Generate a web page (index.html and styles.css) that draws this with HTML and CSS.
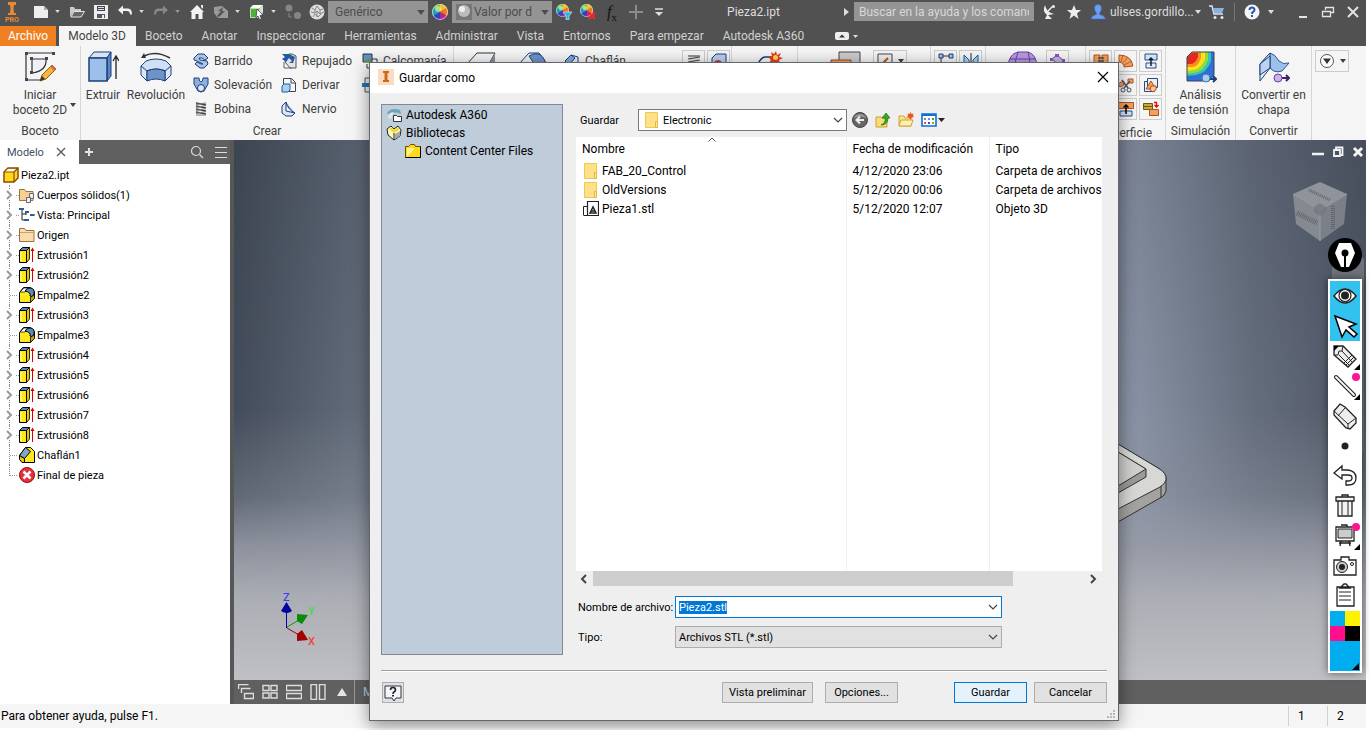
FILE: index.html
```html
<!DOCTYPE html>
<html lang="es">
<head>
  <meta charset="UTF-8">
  <meta name="viewport" content="width=device-width, initial-scale=1.0">
  <title>Pieza2.ipt</title>
  <link rel="stylesheet" href="styles.css">
</head>
<body>
  <!-- shared icons -->
  <svg width="0" height="0" class="defs" aria-hidden="true">
    <symbol id="caret" viewBox="0 0 6 4"><path d="M0 0h6L3 4z" fill="currentColor"/></symbol>
    <symbol id="chev" viewBox="0 0 10 6"><path d="M1 1l4 4 4-4" fill="none" stroke="#444" stroke-width="1.2"/></symbol>
    <symbol id="arrow-r" viewBox="0 0 10 10"><path d="M2 1l4 4-4 4" fill="none" stroke="#999" stroke-width="2"/></symbol>
    <symbol id="undo" viewBox="0 0 16 16"><path d="M1 6l5-4.500v3h5q4 0 4 6h-2q0-3.500-3-3.500H6v3.500z" fill="currentColor"/></symbol>
    <symbol id="wheel" viewBox="0 0 16 16">
      <path d="M8 8V0a8 8 0 0 1 7 4z" fill="#f4c020"/><path d="M8 8l7-4a8 8 0 0 1 0 8z" fill="#f07820"/>
      <path d="M8 8l7 4a8 8 0 0 1-7 4z" fill="#c02090"/><path d="M8 8v8a8 8 0 0 1-7-4z" fill="#3040c0"/>
      <path d="M8 8l-7 4a8 8 0 0 1 0-8z" fill="#20a0b0"/><path d="M8 8L1 4a8 8 0 0 1 7-4z" fill="#60c030"/>
      <circle cx="8" cy="8" r="7.500" fill="none" stroke="#ddd" stroke-width=".8"/><circle cx="6" cy="5" r="3" fill="#fff" opacity=".5"/>
    </symbol>
    <symbol id="folder" viewBox="0 0 16 16"><path d="M1.500.5h12v15h-12z" fill="#ffe08a" stroke="#efc94c"/><path d="M11.500 9.500h2v6h-2z" fill="#ffeaa8" stroke="#e6b930"/></symbol>
    <symbol id="extrude" viewBox="0 0 16 16">
      <path d="M.5 3.500l3-3h7l-3 3z" fill="#4f86bd" stroke="#000"/><path d="M7.500 3.500l3-3v11.500l-3 3.500z" fill="#e8c400" stroke="#000" stroke-width=".8"/>
      <path d="M.5 3.500h7v12h-7z" fill="#ffe81c" stroke="#000"/><path d="M2 5v9" stroke="#fffbc0"/>
      <path d="M13.500 2v13" stroke="#e00000"/><path d="M11.500 4L13.500.5l2 3.500z" fill="#e00000"/>
    </symbol>
    <symbol id="fillet" viewBox="0 0 16 16">
      <path d="M.5 5.500l4-5h7l4 4v7l-4 4H.5z" fill="#ffe81c" stroke="#000"/><path d="M1 5l4-4h4L6 5z" fill="#fff" stroke="#000" stroke-width=".7"/>
      <path d="M6 4q2-4 6-3 4 1 3 6l-2 3-2-1q1-4-5-5z" fill="#5d88ba" stroke="#000"/><path d="M11.500 10.500l4-3v4l-4 4z" fill="#c8a800" stroke="#000" stroke-width=".8"/>
    </symbol>
    <symbol id="surf" viewBox="0 0 16 16"><path d="M2 10h12v5H2z" fill="#d9e4f2" stroke="#274b87"/><path d="M.5 1.500h15v6H.5z" fill="#f2a25f" stroke="#b5521b"/><path d="M8 13V4M5.500 6.500L8 4l2.500 2.500" fill="none" stroke="#000" stroke-width="1.500"/></symbol>
  </svg>

  <div class="app">
    <header class="titlebar">
      <svg class="logo" viewBox="0 0 25 25"><path d="M8 3h8v3h-2l-.500 3 .500 5h2v2H8v-2h2l.500-5-.500-3H8z" fill="#e88a35"/><text x="12" y="23" class="logo-text">PRO</text></svg>
      <div class="quick">
        <button aria-label="Nuevo"><svg viewBox="0 0 16 16"><path d="M1 2h10l4 4v8H1z" fill="#eee"/><path d="M11 2v4h4z" fill="#aaa"/></svg></button>
        <svg class="caret"><use href="#caret"/></svg>
        <button aria-label="Abrir"><svg viewBox="0 0 16 16"><path d="M1 13V3h4l1 2h6v2H5z" fill="#c8ccd0"/><path d="M5 7.500h10.500L12 13H2z" fill="#666" stroke="#e4e6e8"/></svg></button>
        <button aria-label="Guardar archivo"><svg viewBox="0 0 16 16"><path d="M1 1h14v14H1z" fill="#eee"/><path d="M4 2h8v5H4z" fill="#445"/><path d="M5 3.500h6M5 5.500h6" stroke="#ddd"/><path d="M4 10h8v4H4z" fill="#556"/><path d="M9 11h2v3H9z" fill="#eee"/></svg></button>
        <button aria-label="Deshacer"><svg viewBox="0 0 16 16" class="bright"><use href="#undo"/></svg></button>
        <svg class="caret"><use href="#caret"/></svg>
        <button aria-label="Rehacer"><svg viewBox="0 0 16 16" class="flip"><use href="#undo"/></svg></button>
        <svg class="caret dim"><use href="#caret"/></svg>
        <button aria-label="Inicio"><svg viewBox="0 0 16 16"><path d="M8 1l7 7h-1.500v7h-4v-5h-3v5h-4V8H1z" fill="#f2f2f2"/><path d="M12 1h2v4l-2-2z" fill="#eee"/></svg></button>
        <button aria-label="Actualizar"><svg viewBox="0 0 16 16"><path d="M1 3l8-1 6 5v7H5l-4-5z" fill="#9a9a9a"/><path d="M4 12l4-5H5l5-4-1 4h3l-6 6z" fill="#555"/></svg></button>
        <svg class="caret"><use href="#caret"/></svg>
        <button aria-label="Seleccionar"><svg viewBox="0 0 16 16"><path d="M1 4l3-3h10l-3 3z" fill="#fff"/><path d="M11 4l3-3v8l-3 3z" fill="#ddd"/><path d="M1.500 4.500h9v9h-9z" fill="#4fae3c" stroke="#b8e0a8"/><path d="M8 5l6 6-3 .5 1.500 3.500-2 .5L9 12l-2 2z" fill="#fff" stroke="#333" stroke-width=".7"/></svg></button>
        <svg class="caret"><use href="#caret"/></svg>
        <button aria-label="Copiar"><svg viewBox="0 0 16 16"><circle cx="4" cy="4" r="3.500" fill="#858585"/><circle cx="12.500" cy="11.500" r="3.500" fill="#858585"/><path d="M4 9v4h3" fill="none" stroke="#888"/></svg></button>
        <button aria-label="Material"><svg viewBox="0 0 16 16"><circle cx="8" cy="8" r="7.500" fill="#ddd"/><path d="M3 4l3 2 2-4 3 4 3-1M2 8l4 1 2-2 3 3 4-2M4 13l2-3 3 3 3-3M6 6v3M11 6v4M8 7v6" fill="none" stroke="#888"/></svg></button>
      </div>
      <div class="materials">
        <div class="dark-combo"><select aria-label="Material"><option>Genérico</option></select><svg class="dc-arrow"><use href="#caret"/></svg></div>
        <svg class="i16"><use href="#wheel"/></svg>
        <div class="dark-combo with-icon"><svg class="i16 dc-icon" viewBox="0 0 16 16"><path d="M0 0h16v16H0z" fill="#777"/><circle cx="8" cy="7" r="6" fill="#bbb"/><circle cx="6" cy="5" r="3" fill="#eee"/></svg><select aria-label="Aspecto"><option>Valor por defecto</option></select><svg class="dc-arrow"><use href="#caret"/></svg></div>
      </div>
      <div class="quick-end">
        <button aria-label="Ajustar"><svg viewBox="0 0 16 16"><use href="#wheel" width="13" height="13"/><path d="M7 8h9l-3 4v4h-3v-4z" fill="#29b5ea" stroke="#eee" stroke-width=".6"/></svg></button>
        <button aria-label="Borrar"><svg viewBox="0 0 16 16"><use href="#wheel" width="13" height="13"/><path d="M9 9l6 6M15 9l-6 6" stroke="#f22" stroke-width="2"/></svg></button>
        <button aria-label="Parámetros" class="fx"><i>f</i><sub>x</sub></button>
        <button aria-label="Añadir"><svg viewBox="0 0 16 16"><path d="M8 1v14M1 8h14" stroke="#8c8c8c" stroke-width="2"/></svg></button>
        <svg class="menu-caret" viewBox="0 0 8 8"><path d="M0 1h8" stroke="#ddd" stroke-width="1.500"/><path d="M0 4h8L4 8z" fill="#ddd"/></svg>
      </div>
      <h1>Pieza2.ipt</h1>
      <div class="help-area">
        <svg class="play" viewBox="0 0 5 8"><path d="M0 0l5 4-5 4z" fill="#ddd"/></svg>
        <input class="help-search" type="text" aria-label="Buscar" placeholder="Buscar en la ayuda y los comandos">
        <svg class="i16" viewBox="0 0 16 16"><path d="M3 1q1 7 9 9l-5 1h-1l4 4H3l2-4Q0 7 3 1z" fill="#eee"/><path d="M6 7l5-5" stroke="#eee" stroke-width="1.500"/><circle cx="11.500" cy="2.500" r="1.500" fill="#eee"/></svg>
        <svg class="i16" viewBox="0 0 16 16"><path d="M8 1l2 5h5l-4 3.500L12.500 15 8 11.500 3.500 15 5 9.500 1 6h5z" fill="#eee"/></svg>
        <svg class="i16" viewBox="0 0 16 16"><path d="M4.500 4q0-3.500 3.500-3.500T11.500 4 9.500 9v1.500q5 .5 6 4.500H1q1-4 5.500-4.500V9Q4.500 7 4.500 4z" fill="#6a9ef0" stroke="#3c6cc0" stroke-width=".6"/></svg>
        <a href="#" class="user">ulises.gordillo...</a>
        <svg class="caret user-caret"><use href="#caret"/></svg>
        <svg class="i16" viewBox="0 0 16 16"><path d="M0 2h3l2 8h9" fill="none" stroke="#dbe6f6" stroke-width="1.500"/><path d="M4 4h11l-2 5H5z" fill="#8ab0e0"/><circle cx="6" cy="13.500" r="1.500" fill="#dde8fa"/><circle cx="13" cy="13.500" r="1.500" fill="#dde8fa"/></svg>
        <span class="tb-sep"></span>
        <svg class="i16" viewBox="0 0 16 16"><circle cx="8" cy="8" r="7.500" fill="#f4f6fa"/><path d="M5.500 6q0-2.500 2.500-2.500T10.500 6q0 1-1.500 2Q8 8.500 8 10" fill="none" stroke="#2958b0" stroke-width="2"/><path d="M7 11h2v2H7z" fill="#2958b0"/></svg>
        <svg class="caret"><use href="#caret"/></svg>
      </div>
      <div class="window-btns">
        <button aria-label="Minimizar"><svg viewBox="0 0 14 14"><path d="M3 12h8" stroke="#e4e4e4" stroke-width="2"/></svg></button>
        <button aria-label="Restaurar"><svg viewBox="0 0 14 14"><path d="M4.500 5V2.500h8v5H9M1.500 6.500h8v5h-8z" fill="none" stroke="#e4e4e4" stroke-width="1.300"/></svg></button>
        <button aria-label="Cerrar"><svg viewBox="0 0 14 14"><path d="M2 2l10 10M12 2L2 12" stroke="#e4e4e4" stroke-width="2"/></svg></button>
      </div>
    </header>

    <nav class="tabs">
      <a href="#" class="file">Archivo</a>
      <a href="#" class="active">Modelo 3D</a>
      <a href="#">Boceto</a>
      <a href="#">Anotar</a>
      <a href="#">Inspeccionar</a>
      <a href="#">Herramientas</a>
      <a href="#">Administrar</a>
      <a href="#">Vista</a>
      <a href="#">Entornos</a>
      <a href="#">Para empezar</a>
      <a href="#">Autodesk A360</a>
      <svg class="tab-min" viewBox="0 0 24 10"><rect y="1" width="14" height="8" rx="2" fill="#eee"/><path d="M4 6.500h6L7 3.500z" fill="#333"/><path d="M18 4h5l-2.500 3z" fill="#ddd"/></svg>
    </nav>

    <section class="ribbon">
      <div class="panel p-sketch">
        <button class="big">
          <svg viewBox="0 0 32 32"><path d="M2 2h28M2 2v27h14" fill="none" stroke="#333" stroke-width="1.200"/><path d="M8 8h14q1 12-14 14z" fill="#eef1f6" stroke="#333" stroke-width="1.200"/><path d="M1 1h3v3H1zM28 1h3v3h-3zM1 27h3v3H1zM6 6h3v3H6zM21 6h3v3h-3zM6 20h3v3H6z" fill="#445"/><path d="M18 24L28 14l4 4-10 10-6 2z" fill="#f5b83c" stroke="#8a5a18"/><path d="M26 16l4 4 2-2-4-4z" fill="#e06a4c"/><path d="M16 30l2-5 3 3z" fill="#333"/></svg>
          <span>Iniciar<br>boceto 2D</span>
        </button>
        <svg class="caret sk-caret"><use href="#caret"/></svg>
        <h2>Boceto</h2>
      </div>
      <div class="panel p-create">
        <div class="tools">
          <button class="big b-ext"><svg viewBox="0 0 32 32"><path d="M2 7l5-6h17l-4 6z" fill="#d6e4f6" stroke="#1d3f7c"/><path d="M20 7l4-6v24l-4 5z" fill="#5a86c2" stroke="#1d3f7c"/><path d="M2 7h18v23H2z" fill="#9cc0ea" stroke="#1d3f7c" stroke-width="1.500"/><path d="M29 28V6M26 10l3-5 3 5" fill="none" stroke="#222" stroke-width="1.300"/></svg><span>Extruir</span></button>
          <button class="big b-rev"><svg viewBox="0 0 32 32"><path d="M4 5q12-6 26 2" fill="none" stroke="#333" stroke-width="1.500"/><path d="M1 7l3-5 2 5z" fill="#333"/><path d="M1 15l5-5q10-4 20 0l5 5-5 5q-9-4-20 0z" fill="#cfe0f5" stroke="#1d3f7c"/><path d="M1 15l6 5v10l-6-6zM31 15l-6 5v10l6-6z" fill="#dbe7f6" stroke="#1d3f7c"/><path d="M7 20q9-4 18 0v10q-9-4-18 0z" fill="#6d93c8" stroke="#1d3f7c"/></svg><span>Revolución</span></button>
          <div class="small-grid">
            <button><svg viewBox="0 0 16 16"><path d="M1 5l4-4h6l4 4-3 2-3-2H6l1 2 7 1 1 3-4 4H7l-5-4 2-2 4 2h2L4 8 1 7z" fill="#a8c4e8" stroke="#1d3f7c"/></svg>Barrido</button>
            <button><svg viewBox="0 0 16 16"><path d="M8 1q3-1 7 2v12H9L4 9z" fill="#dfe3ea" stroke="#555"/><path d="M1 1h7l6 3-2 6H8l3-2-3-3-3 4-4-3 3-2z" fill="#2458a0"/><path d="M3 9v6h8" fill="none" stroke="#567"/></svg>Repujado</button>
            <button><svg viewBox="0 0 16 16"><path d="M1 1h9v8H1z" fill="#5e93d0" stroke="#333"/><path d="M2 9l4-4 4 4z" fill="#5a9c3c"/><path d="M10 6h5v5h-4M5 11v4h4" fill="none" stroke="#333"/></svg>Calcomanía</button>
            <button><svg viewBox="0 0 16 16"><path d="M1 1h5q0 4 2 4t2-4h5v6l-4 7q-3 2-6 0L1 7z" fill="#8db0dd" stroke="#1d3f7c"/><circle cx="8" cy="11" r="3.500" fill="#dbe7f6" stroke="#1d3f7c"/></svg>Solevación</button>
            <button><svg viewBox="0 0 16 16"><path d="M2.500 14.500V1.500h8l4 4v9z" fill="#f4f6fa" stroke="#444"/><path d="M10 2v4h4" fill="none" stroke="#444"/><path d="M1 9l2-2h6v6l-2 2H1z" fill="#a8d0f0" stroke="#1d5f9c"/></svg>Derivar</button>
            <button aria-label="Importar"><svg viewBox="0 0 16 16"><path d="M3 1h12v14H3z" fill="#eee" stroke="#555"/><path d="M0 6h8V3l6 5-6 5v-3H0z" fill="#2c70b8"/></svg></button>
            <button><svg viewBox="0 0 16 16"><path d="M3 2l10 2M3 5l10 2M3 8l10 2M3 11l10 2" stroke="#444" stroke-width="1.500"/><path d="M13 2L3 3.500M13 4.500L3 6.500M13 7.500L3 9.500M13 10.500L3 12.500M13 14H3" stroke="#777"/></svg>Bobina</button>
            <button><svg viewBox="0 0 16 16"><path d="M1 5l4-4v9l9 2-3 3H5l-4-3z" fill="#dbe7f6" stroke="#1d3f7c"/><path d="M5 1q2 8 9 11" fill="#86aadc" stroke="#1d3f7c"/></svg>Nervio</button>
          </div>
        </div>
        <h2>Crear</h2>
      </div>
      <div class="panel p-modify">
        <svg class="i32" viewBox="0 0 32 32"><path d="M2 14L12 3h18l-6 11z" fill="#f2f4f7" stroke="#333"/><path d="M30 3v20l-6-9z" fill="#8a9098"/></svg>
        <svg class="i32" viewBox="0 0 32 32"><path d="M2 14L12 3h10l8 11z" fill="#f2f4f7" stroke="#1d3f7c"/><path d="M12 6q14-8 18 12H20z" fill="#6d93c8" stroke="#1d3f7c"/></svg>
        <span class="chamfer"><svg class="i16" viewBox="0 0 16 16"><path d="M1 8l6-6 7 2v10H6z" fill="#e7eef8" stroke="#1d3f7c"/><path d="M1 8l6-6 4 3-6 7z" fill="#7fa8dc" stroke="#1d3f7c"/></svg>Chaflán</span>
        <button class="cell" aria-label="Rosca"><svg class="i16" viewBox="0 0 16 16"><path d="M3 2h10v13H3z" fill="#ddd"/><path d="M2 3h12M2 6l12-2M2 9l12-2M2 12l12-2" stroke="#444"/></svg></button>
        <button class="cell" aria-label="Combinar"><svg class="i16" viewBox="0 0 16 16"><path d="M1 5l4-4h10v9l-4 5H1z" fill="#b7d0f0" stroke="#1d3f7c"/><path d="M3 9q4-4 8 0v3H3z" fill="#c33"/></svg></button>
      </div>
      <div class="panel p-explore"><svg class="i32" viewBox="0 0 32 32"><path d="M2 16q4-9 8-9h10" fill="none" stroke="#1d3f7c" stroke-width="1.500"/><path d="M21 1l1 4 4-2-2 4 4 1-4 2 1 4-4-2-2 4-1-4-4 1 2-3-3-3 4-1-1-4 3 2z" fill="#e63a1c"/><circle cx="20.500" cy="7.500" r="2.500" fill="#ffd84a"/></svg></div>
      <div class="panel p-work">
        <svg class="i32" viewBox="0 0 32 32"><path d="M9 2h21v14H9z" fill="#ccc" stroke="#445"/><path d="M1 10h20v10H1z" fill="#f0a070" stroke="#a04a18"/></svg>
        <button class="cell wide" aria-label="Eje"><svg class="i16" viewBox="0 0 16 16"><path d="M1 1h14v14H1z" fill="#eee" stroke="#445"/><path d="M3 13l8-8" stroke="#b5521b" stroke-width="2"/></svg><svg class="caret"><use href="#caret"/></svg></button>
      </div>
      <div class="panel p-pattern">
        <button class="cell" aria-label="Rectangular"><svg class="i16" viewBox="0 0 16 16"><path d="M3 3h10M3 3v10" stroke="#333"/><path d="M1 1h4v4H1zM11 1h4v4h-4z" fill="#a8c4e8" stroke="#1d3f7c"/></svg></button>
        <button class="cell" aria-label="Simetría"><svg class="i16" viewBox="0 0 16 16"><path d="M1 2l5 5v7H1zM15 2l-5 5v7h5z" fill="#a8d0f0" stroke="#1d5f9c"/><path d="M8 0v16" stroke="#222"/></svg></button>
      </div>
      <div class="panel p-free">
        <svg class="i32" viewBox="0 0 32 32"><path d="M2 16Q3 4 12 2h10q8 2 9 14z" fill="#b99be0" stroke="#6b3fa8"/><path d="M12 2q-3 8-3 14M22 2q2 6 2 14M4 9h25" fill="none" stroke="#6b3fa8"/></svg>
        <button class="cell" aria-label="Forma"><svg class="i16" viewBox="0 0 16 16"><path d="M2 6l5-4 7 6-4 5z" fill="#c9b2ea" stroke="#555"/><path d="M5 1h4v3H5zM12 6h3v3h-3zM0 5h3v3H0z" fill="#8a56c8"/></svg></button>
      </div>
      <div class="panel p-surface">
        <div class="cells">
          <button class="cell" aria-label="Coser"><svg class="i16" viewBox="0 0 16 16"><path d="M1 2h6v12H1zM9 2h6v12H9z" fill="#f2a25f" stroke="#b5521b"/><path d="M5 5h6M5 8h6M5 11h6" stroke="#222"/></svg></button>
          <button class="cell" aria-label="Parche"><svg class="i16" viewBox="0 0 16 16"><path d="M1 2q12 0 14 11l-9 1q0-4-5-5z" fill="#f2a25f" stroke="#b5521b"/><path d="M5 2L3 9M10 4l-5 6M14 8l-8 4" stroke="#b5521b" stroke-width=".8"/></svg></button>
          <button class="cell" aria-label="Esculpir"><svg class="i16" viewBox="0 0 16 16"><path d="M2 1h12v6H2z" fill="#cfe3f8" stroke="#274b87"/><path d="M3 10h10v5H3z" fill="#e7eef8" stroke="#274b87"/><path d="M8 13V5M6 7l2-2 2 2" fill="none" stroke="#123" stroke-width="1.500"/></svg></button>
          <button class="cell" aria-label="Regla"><svg class="i16"><use href="#surf"/></svg></button>
          <button class="cell" aria-label="Recortar"><svg class="i16" viewBox="0 0 16 16"><path d="M10 2h5v4h-5zM0 7l5-3 1 4-4 2z" fill="#f2a25f" stroke="#b5521b"/><path d="M4 3l6 8M12 4L6 11" stroke="#556" stroke-width="1.500"/><circle cx="5" cy="13" r="2" fill="none" stroke="#456"/><circle cx="11" cy="13" r="2" fill="none" stroke="#456"/></svg></button>
          <button class="cell" aria-label="Reparar"><svg class="i16" viewBox="0 0 16 16"><path d="M1.500 4.500h10v10h-10z" fill="#eee" stroke="#274b87"/><path d="M4.500 1.500h10v9h-10z" fill="#eee" stroke="#274b87"/><path d="M3 12l5-8 5 8z" fill="#f2a25f" stroke="#b5521b"/><path d="M8 9h5v4l-3 2-3-2z" fill="#f7c79c" stroke="#b5521b"/></svg></button>
          <button class="cell" aria-label="Alargar"><svg class="i16"><use href="#surf"/></svg></button>
          <button class="cell" aria-label="Engrosar"><svg class="i16"><use href="#surf"/></svg></button>
          <button class="cell" aria-label="Reemplazar"><svg class="i16" viewBox="0 0 16 16"><path d="M.5 2.500h9v6h-9z" fill="#c8ac3a" stroke="#6b5810"/><path d="M1 5.500h8" stroke="#6b5810"/><path d="M6.500 8.500h9v6h-9z" fill="#f2a25f" stroke="#b5521b"/><path d="M11 1.500h2.500V5M11.500 4l2 2 2-2" fill="none" stroke="#e00" stroke-width="1.300"/></svg></button>
        </div>
        <h2>Superficie</h2>
      </div>
      <div class="panel p-sim">
        <button class="big"><svg viewBox="0 0 32 32"><path d="M2 6l5-5h22v23l-5 6H2z" fill="#2f6fd8"/><path d="M2 6l5-5h19v9q-4 12-15 14l-9 1z" fill="#35c4b8"/><path d="M2 6l5-5h16v8q-4 12-14 13l-7 1z" fill="#8fdc3c"/><path d="M2 6l5-5h13v7q-4 10-11 11l-7 1z" fill="#ffe01c"/><path d="M2 6l5-5h9v6q-3 9-9 9H2z" fill="#f79020"/><path d="M2 6l5-4h6v4q-3 7-7 7H2z" fill="#e5281c"/><path d="M2 6l5-5h22v23l-5 6H2z" fill="none" stroke="#345"/><path d="M23 28h8M28 25l3 3-3 3" fill="none" stroke="#1d3f7c" stroke-width="2"/><circle cx="21" cy="27" r="4" fill="#a9cdf2" stroke="#47a"/></svg><span>Análisis<br>de tensión</span></button>
        <h2>Simulación</h2>
      </div>
      <div class="panel p-conv">
        <button class="big"><svg viewBox="0 0 32 32"><path d="M2 13L12 2q5 1 9 8 4 4 10 2l-7 8q-9 3-13-5z" fill="#9cc0ea" stroke="#2b5590"/><path d="M2 13L12 2v15L2 30z" fill="#e6eefa" stroke="#1d3f7c"/><path d="M2 13l10-8v12L2 24z" fill="#bcd3f0" stroke="#1d3f7c"/><path d="M22 27h9M28 24l3 3-3 3" fill="none" stroke="#3b2470" stroke-width="2"/><circle cx="20" cy="27" r="4" fill="#c9b2ea" stroke="#6b3fa8"/></svg><span>Convertir en<br>chapa</span></button>
        <h2>Convertir</h2>
      </div>
      <div class="panel p-last">
        <button class="cell wide" aria-label="Opciones de cinta"><svg class="i16" viewBox="0 0 16 16"><circle cx="8" cy="8" r="6.500" fill="#fff" stroke="#555"/><path d="M4 5.500h8L8 11z" fill="#334"/></svg><svg class="caret"><use href="#caret"/></svg></button>
      </div>
    </section>

    <main class="work">
      <aside class="browser">
        <div class="browser-head">
          <span class="model-tab">Modelo <svg viewBox="0 0 10 10"><path d="M1 1l8 8M9 1L1 9" stroke="#555" stroke-width="1.200"/></svg></span>
          <svg class="plus" viewBox="0 0 10 10"><path d="M5 1v8M1 5h8" stroke="#e4e4e4" stroke-width="2"/></svg>
          <span class="grow"></span>
          <svg class="hd" viewBox="0 0 14 14"><circle cx="6" cy="6" r="4.500" fill="none" stroke="#ddd" stroke-width="1.200"/><path d="M9.500 9.500L13 13" stroke="#ddd" stroke-width="1.300"/></svg>
          <svg class="hd" viewBox="0 0 14 14"><path d="M1 2.500h12M1 7.500h12M1 12.500h12" stroke="#ddd"/></svg>
        </div>
        <ul class="tree">
          <li class="root"><svg class="i16" viewBox="0 0 16 16"><path d="M1 5l4-4h10v10l-4 4H1z" fill="#ffd81c" stroke="#8c4a08" stroke-width="1.500"/><path d="M2 5l3-3h9l-3 3z" fill="#fffbe0"/><path d="M1 5h10v10M11 5l4-4" fill="none" stroke="#8c4a08" stroke-width="1.200"/></svg>Pieza2.ipt</li>
          <li><svg class="exp"><use href="#arrow-r"/></svg><svg class="i16" viewBox="0 0 16 16"><path d="M.5 13.500v-11h5l1.500 2h7v9z" fill="#f6cf92" stroke="#9a7440"/><path d="M10.500 6.500h4v5h-4z" fill="#eef0f4" stroke="#667"/><path d="M7.500 10.500h4v5h-4z" fill="#eef0f4" stroke="#667"/></svg>Cuerpos sólidos(1)</li>
          <li><svg class="exp"><use href="#arrow-r"/></svg><svg class="i16" viewBox="0 0 16 16"><path d="M3 2v11h3M3 7h4M7 5v3M12 8h4" fill="none" stroke="#222"/><path d="M0 1h5v2H0zM6 4h4v2H6zM5 12h5v2H5zM11 7h4v2h-4z" fill="#2c5f96"/></svg>Vista: Principal</li>
          <li><svg class="exp"><use href="#arrow-r"/></svg><svg class="i16" viewBox="0 0 16 16"><path d="M.5 14.500v-13h5l1.500 2h8v11z" fill="#f9dcae" stroke="#9a7440"/><path d="M1 5.500h14" stroke="#c9a468"/></svg>Origen</li>
          <li><svg class="exp"><use href="#arrow-r"/></svg><svg class="i16"><use href="#extrude"/></svg>Extrusión1</li>
          <li><svg class="exp"><use href="#arrow-r"/></svg><svg class="i16"><use href="#extrude"/></svg>Extrusión2</li>
          <li class="leaf"><svg class="i16"><use href="#fillet"/></svg>Empalme2</li>
          <li><svg class="exp"><use href="#arrow-r"/></svg><svg class="i16"><use href="#extrude"/></svg>Extrusión3</li>
          <li class="leaf"><svg class="i16"><use href="#fillet"/></svg>Empalme3</li>
          <li><svg class="exp"><use href="#arrow-r"/></svg><svg class="i16"><use href="#extrude"/></svg>Extrusión4</li>
          <li><svg class="exp"><use href="#arrow-r"/></svg><svg class="i16"><use href="#extrude"/></svg>Extrusión5</li>
          <li><svg class="exp"><use href="#arrow-r"/></svg><svg class="i16"><use href="#extrude"/></svg>Extrusión6</li>
          <li><svg class="exp"><use href="#arrow-r"/></svg><svg class="i16"><use href="#extrude"/></svg>Extrusión7</li>
          <li><svg class="exp"><use href="#arrow-r"/></svg><svg class="i16"><use href="#extrude"/></svg>Extrusión8</li>
          <li class="leaf"><svg class="i16" viewBox="0 0 16 16"><path d="M.5 8.500l6-8h5l4 4v11H4z" fill="#ffe81c" stroke="#000"/><path d="M.5 8.500l6-8 5 4-6 7z" fill="#7fa8cc" stroke="#000"/><path d="M.5 8.500l5 3v4H3l-2.500-3z" fill="#e8c800" stroke="#000"/></svg>Chaflán1</li>
          <li class="leaf last"><svg class="i16" viewBox="0 0 16 16"><circle cx="8" cy="8" r="7.500" fill="#e8303c" stroke="#8c1018"/><path d="M4.500 4.500l7 7M11.500 4.500l-7 7" stroke="#fff" stroke-width="2.500"/></svg>Final de pieza</li>
        </ul>
      </aside>

      <section class="viewport">
        <div class="canvas">
          <svg class="axes" viewBox="0 0 40 60">
            <path d="M7.500 38V20" stroke="#0000a8"/><path d="M7.500 12l5.500 9q-5 4-11 0z" fill="#0000a0"/>
            <path d="M8 37l12-7" stroke="#00a000"/><path d="M18 24l11 1-6 9-5-3z" fill="#0a8c0a"/>
            <path d="M8 38l12 7" stroke="#a00000"/><path d="M23 40l6 10-11 1v-7z" fill="#a00000"/>
            <text x="4" y="11" fill="#3c3cf0">Z</text><text x="29" y="25" fill="#3ce03c">Y</text><text x="29" y="55" fill="#f04040">X</text>
          </svg>
          <svg class="part" viewBox="0 0 60 80">
            <path d="M0 2l40 24q9 5 8 12v11q-1 5-6 7L0 80z" fill="#a3a29f" stroke="#333"/>
            <path d="M0 2l40 24q9 5 8 12-1 4-6 7L0 67z" fill="#d7d7d5" stroke="#333"/>
            <path d="M0 10l28 17v8L0 51z" fill="#9a9a98" stroke="#333"/><path d="M0 10l28 17L0 44z" fill="#cfcfcd" stroke="#333"/>
            <path d="M43 44v12" stroke="#333"/>
          </svg>
          <svg class="cube" viewBox="0 0 56 62">
            <path d="M28 1l27 12-27 16L1 13z" fill="#8f939a"/><path d="M1 13l27 16v31L4 43z" fill="#858990"/><path d="M55 13L28 29v31l24-17z" fill="#7b7f87"/>
            <path d="M28 29v31M1 13l27 16 27-16" stroke="#9a9ea5" fill="none"/><path d="M22 26l6-4 6 4v5l-6 4-6-4z" fill="#70757e" opacity=".7"/>
            <path d="M17 9l21 10" stroke="#63676f" stroke-width="3" stroke-dasharray="1 1"/><path d="M5 32l20 10" stroke="#63676f" stroke-width="5" stroke-dasharray="1 1"/><path d="M41 48V24" stroke="#5f636b" stroke-width="4" stroke-dasharray="1 1"/>
          </svg>
          <div class="doc-btns">
            <svg viewBox="0 0 12 12"><path d="M0 8h12" stroke="#f4f4f4" stroke-width="2.500"/></svg>
            <svg viewBox="0 0 12 12"><path d="M4 3V1.500h6.500V9H9M2 4h6v6H2z" fill="none" stroke="#f4f4f4" stroke-width="1.800"/></svg>
            <svg viewBox="0 0 12 12"><path d="M2 2l8 8M10 2l-8 8" stroke="#f4f4f4" stroke-width="3"/></svg>
          </div>
          <div class="navbar"></div>
        </div>
        <div class="view-strip">
          <svg viewBox="0 0 16 16"><path d="M.5 5V.5h10M3.500 9V4.500h9M6.500 9.500h9v5h-9z" fill="none" stroke="#ddd" stroke-width="1.400"/></svg>
          <svg viewBox="0 0 16 16"><path d="M1 1.500h6v5H1zM9 1.500h6v5H9zM1 9h6v5H1zM9 9h6v5H9z" fill="none" stroke="#ddd" stroke-width="1.400"/></svg>
          <svg viewBox="0 0 16 16"><path d="M.5 1.500h15v5H.5zM.5 9.500h15v5H.5z" fill="none" stroke="#ddd" stroke-width="1.400"/></svg>
          <svg viewBox="0 0 16 16"><path d="M1 .500h5.500v15H1zM9.500.500H15v15H9.500z" fill="none" stroke="#ddd" stroke-width="1.400"/></svg>
          <svg viewBox="0 0 16 16"><path d="M3 12L8 4l5 8z" fill="#e4e4e4"/></svg>
          <span class="strip-tab">Mi inicio</span>
        </div>
      </section>
    </main>

    <footer class="status">
      <span class="msg">Para obtener ayuda, pulse F1.</span>
      <span class="num">1</span>
      <span class="num">2</span>
    </footer>
  </div>

  <div class="dialog" role="dialog" aria-labelledby="dlg-title">
    <div class="dlg-head">
      <svg class="i16" viewBox="0 0 16 16"><path d="M0 0h16v16H0z" fill="#fbdcc0"/><path d="M5 2h6v2H9.500v7H11v2H5v-2h1.500V4H5z" fill="#c8691c"/></svg>
      <h2 id="dlg-title">Guardar como</h2>
      <button aria-label="Cerrar cuadro"><svg viewBox="0 0 12 12"><path d="M1 1l10 10M11 1L1 11" stroke="#000" stroke-width="1.200"/></svg></button>
    </div>
    <div class="dlg-body">
      <ul class="places">
        <li><svg class="i16" viewBox="0 0 16 16"><path d="M1 6q4-6 13-3l1 4Q9 3 4 9z" fill="#6fa3ba"/><path d="M2 11q0-6 6-6l-3 7z" fill="#d8e8ee"/><path d="M7.500 14.500v-6h3l1 1h4v5z" fill="#fff" stroke="#333"/></svg>Autodesk A360</li>
        <li><svg class="i16" viewBox="0 0 16 16"><path d="M1 4l4-3 3 3 4-3 3 4-1 6-6 4-6-5z" fill="#fff8c0" stroke="#222"/><path d="M3 4l3-2 2 3 4-3 1 3-5 3z" fill="#f0dc28"/><path d="M8 8v7" stroke="#222"/><path d="M9 9l5-3v5l-5 3z" fill="#aaa"/></svg>Bibliotecas</li>
        <li class="child"><svg class="i16" viewBox="0 0 16 16"><path d="M.5 14.500v-11h3l2-2h4l1 2h5v11z" fill="#ffd81c" stroke="#6a5200"/><path d="M2 5h8l-7 8H2z" fill="#fff28c"/><path d="M.5 14.500h15v-11" fill="none" stroke="#000"/></svg>Content Center Files</li>
      </ul>
      <div class="files">
        <div class="lookin">
          <label for="folder-sel">Guardar</label>
          <div class="combo"><svg class="i16"><use href="#folder"/></svg><select id="folder-sel"><option>Electronic</option></select><svg class="chev"><use href="#chev"/></svg></div>
          <div class="nav-btns">
            <button aria-label="Atrás"><svg viewBox="0 0 16 16"><circle cx="8" cy="8" r="7.500" fill="#666" stroke="#444"/><path d="M1 6q7-8 14 0-7-3-14 0z" fill="#999"/><path d="M12 8H5M8 4.500L4.500 8 8 11.500" fill="none" stroke="#eee" stroke-width="2"/></svg></button>
            <button aria-label="Subir"><svg viewBox="0 0 16 16"><path d="M1 5h5l1 1h5v9H1z" fill="#f8dc78" stroke="#c8a030"/><path d="M6 13q5-2 4-7H7l4-5 4 5h-2q0 7-7 7z" fill="#38a828" stroke="#1c7010" stroke-width=".7"/></svg></button>
            <button aria-label="Nueva carpeta"><svg viewBox="0 0 16 16"><path d="M1 4h5l1 2h6v8H1z" fill="#fbe38a" stroke="#cfa636"/><path d="M1 14l2-6h12l-2 6z" fill="#fdf0b0" stroke="#cfa636"/><path d="M12.500 0l1 2 2-.5-.5 2 1 1.500-2 .5-1.500 2-1.500-2-2-.5 1-1.500-.5-2 2 .5z" fill="#ee5522"/></svg></button>
            <button class="views" aria-label="Vistas"><svg viewBox="0 0 24 16"><path d="M1 2h14v12H1z" fill="#fff" stroke="#1070d8" stroke-width="1.600"/><path d="M1 2h14v2H1z" fill="#1070d8"/><path d="M3 6h2v2H3zM7 6h2v2H7z" fill="#88a"/><path d="M11 6h2v2h-2z" fill="#3a3"/><path d="M3 10h2v2H3z" fill="#e55"/><path d="M7 10h2v2H7z" fill="#25c"/><path d="M11 10h2v2h-2z" fill="#c90"/><path d="M17 6h7l-3.500 4z" fill="#222"/></svg></button>
          </div>
        </div>
        <div class="list">
          <svg class="sort" viewBox="0 0 8 5"><path d="M.5 4.500L4 1l3.500 3.500" fill="none" stroke="#555"/></svg>
          <table>
            <colgroup><col class="c-name"><col class="c-date"><col></colgroup>
            <thead><tr><th>Nombre</th><th>Fecha de modificación</th><th>Tipo</th></tr></thead>
            <tbody>
              <tr><td><span class="fname"><svg class="i16"><use href="#folder"/></svg>FAB_20_Control</span></td><td>4/12/2020 23:06</td><td>Carpeta de archivos</td></tr>
              <tr><td><span class="fname"><svg class="i16"><use href="#folder"/></svg>OldVersions</span></td><td>5/12/2020 00:06</td><td>Carpeta de archivos</td></tr>
              <tr><td><span class="fname"><svg class="i16" viewBox="0 0 16 16"><path d="M.5 14.500v-9H4" fill="#fff" stroke="#222"/><path d="M4.500.5h11v14h-11z" fill="#fff" stroke="#222" stroke-width="1.200"/><path d="M1 14.500h15" stroke="#222"/><path d="M7 12l3-6 3 6zM8.500 10h3" fill="none" stroke="#222" stroke-width="1.500"/></svg>Pieza1.stl</span></td><td>5/12/2020 12:07</td><td>Objeto 3D</td></tr>
              <tr class="filler"><td></td><td></td><td></td></tr>
            </tbody>
          </table>
        </div>
        <div class="hscroll"><svg viewBox="0 0 8 10"><path d="M6 1L2 5l4 4" fill="none" stroke="#444" stroke-width="2"/></svg><div class="track"><div class="thumb"></div></div><svg viewBox="0 0 8 10"><path d="M2 1l4 4-4 4" fill="none" stroke="#444" stroke-width="2"/></svg></div>
        <div class="field">
          <label for="filename">Nombre de archivo:</label>
          <div class="combo focus"><input id="filename" type="text" value="Pieza2.stl"><svg class="chev"><use href="#chev"/></svg></div>
        </div>
        <div class="field">
          <label for="filetype">Tipo:</label>
          <div class="combo gray"><select id="filetype"><option>Archivos STL (*.stl)</option></select><svg class="chev"><use href="#chev"/></svg></div>
        </div>
      </div>
    </div>
    <div class="dlg-foot">
      <button class="help-btn" aria-label="Ayuda"><svg viewBox="0 0 18 18"><path d="M1 2h16v12h-5l-2 3-2-3H1z" fill="#f4f6fa" stroke="#334"/><path d="M6.500 6q0-2.500 2.500-2.500T11.500 6q0 1-1.500 2-1 .5-1 2" fill="none" stroke="#222" stroke-width="1.600"/><path d="M8 11h2v1.500H8z" fill="#222"/></svg></button>
      <span class="grow"></span>
      <button class="btn preview">Vista preliminar</button>
      <button class="btn options">Opciones...</button>
      <button class="btn primary">Guardar</button>
      <button class="btn cancel">Cancelar</button>
    </div>
    <svg class="grip" viewBox="0 0 8 8"><path d="M6 0h2v2H6zM3 3h2v2H3zM6 3h2v2H6zM0 6h2v2H0zM3 6h2v2H3zM6 6h2v2H6z" fill="#b8b8b8"/></svg>
  </div>

  <!-- floating drawing palette -->
  <div class="palette">
    <svg class="pen" viewBox="0 0 34 34"><circle cx="17" cy="17" r="17" fill="#000"/><path d="M11 5h12l4 10-6 14h-3V18h-2v11h-3L7 15z" fill="#fff"/><circle cx="17" cy="15" r="3.500" fill="#000"/></svg>
    <div class="palette-box">
      <button class="on" aria-label="Ver"><svg viewBox="0 0 30 30"><path d="M4 15q11-14 22 0-11 14-22 0z" fill="#fff" stroke="#222" stroke-width="1.500"/><circle cx="15" cy="14.500" r="6" fill="#fff" stroke="#222" stroke-width="1.200"/><circle cx="15" cy="14.500" r="4" fill="#222"/></svg></button>
      <button class="on" aria-label="Cursor"><svg viewBox="0 0 30 30"><path d="M5 5l21 8-7 3 8 7-3 3-8-7-4 7z" fill="#fff" stroke="#000" stroke-width="1.500"/></svg></button>
      <button aria-label="Lápiz"><svg viewBox="0 0 30 30"><path d="M4 5h9l13 13-8 8L4 14z" fill="#eee" stroke="#222" stroke-width="1.300"/><path d="M4 5h5L4 10z" fill="#000"/><path d="M13 5l-1 5-3 0-1 4-4 0M12 10l10 11M9 14l10 10M22 14l-8 8M24 16l-8 8" fill="none" stroke="#222"/><path d="M24 29h6v-6z"/></svg></button>
      <button aria-label="Línea"><svg viewBox="0 0 30 30"><path d="M6 6l18 18" stroke="#222" stroke-width="4" stroke-linecap="round"/><path d="M6 6l18 18" stroke="#fff" stroke-width="1.800" stroke-linecap="round"/><circle cx="26" cy="6" r="4" fill="#ff1493"/><path d="M24 29h6v-6z"/></svg></button>
      <button aria-label="Borrador"><svg viewBox="0 0 30 30"><path d="M4 10l6-7 5 3 11 11v5l-6 6-4-1L4 14z" fill="#eee" stroke="#222" stroke-width="1.300"/><path d="M8 15l7-8M18 23l8-6M4 10l14 13v4" fill="none" stroke="#222"/></svg></button>
      <button aria-label="Grosor"><svg viewBox="0 0 30 30"><circle cx="15" cy="15" r="3.500" fill="#222"/></svg></button>
      <button aria-label="Deshacer trazo"><svg viewBox="0 0 30 30"><path d="M4 12l8-7v4h6q8 1 8 8t-8 7h-2v-4h2q4 0 4-3t-4-3h-6v4z" fill="#fff" stroke="#222" stroke-width="1.300"/></svg></button>
      <button aria-label="Vaciar"><svg viewBox="0 0 30 30"><path d="M8 10h14v15H8zM6 6h18v4H6zM12 4h6v2h-6z" fill="#f4f4f4" stroke="#222" stroke-width="1.300"/><path d="M12 10v14M18 10v14" stroke="#222"/></svg></button>
      <button aria-label="Pizarra"><svg viewBox="0 0 30 30"><path d="M6 6h18v14H6z" fill="#fff" stroke="#222" stroke-width="1.300"/><path d="M8 8h14v9H8z" fill="#ccc" stroke="#222"/><path d="M11 4h6v2M11 20l-1 5M19 20l1 5M9 22h12" fill="none" stroke="#222" stroke-width="1.300"/><circle cx="26" cy="6" r="4" fill="#ff1493"/><path d="M24 29h6v-6z"/></svg></button>
      <button aria-label="Captura"><svg viewBox="0 0 30 30"><path d="M4 9h7V6h8v3h7v15H4z" fill="#fff" stroke="#222" stroke-width="1.300"/><circle cx="12" cy="16" r="5.500" fill="#ccc" stroke="#222"/><circle cx="12" cy="16" r="3" fill="#222"/><circle cx="22" cy="13" r="1.500" fill="none" stroke="#222"/></svg></button>
      <button aria-label="Notas"><svg viewBox="0 0 30 30"><path d="M7 6h17v19H7zM10 7l4-4h2l4 4z" fill="#fff" stroke="#222" stroke-width="1.300"/><path d="M9 11h12M9 15h12M9 19h12" stroke="#222"/></svg></button>
      <div class="swatches"><span class="cyan"></span><span class="yellow"></span><span class="pink"></span><span class="black"></span></div>
      <button class="current" aria-label="Color actual"><svg viewBox="0 0 30 30"><path d="M22 29h7v-7z"/></svg></button>
    </div>
  </div>

  <script>
    const filename = document.getElementById("filename");
    filename.focus();
    filename.select();
  </script>
</body>
</html>
```
FILE: styles.css
```css
* { box-sizing: border-box; }
body {
  margin: 0;
  background: #fff;
  font-family: Roboto, "Open Sans", sans-serif;
  font-size: 12px;
  color: #000;
  overflow: hidden;
}
button, input, select {
  font: inherit;
  color: inherit;
  background: none;
  border: 0;
  padding: 0;
  margin: 0;
}
select { appearance: none; }
input:focus { outline: none; }
h1, h2 { margin: 0; font-size: 12px; font-weight: 400; }
ul { list-style: none; margin: 0; padding: 0; }
a { color: inherit; text-decoration: none; }
svg { display: block; flex: none; }
.defs { position: absolute; }
.i16 { width: 16px; height: 16px; }
.i32 { width: 32px; height: 32px; }
.caret { width: 6px; height: 4px; }
.grow { flex: 1; }

.app {
  display: flex;
  flex-direction: column;
  height: calc(100vh - 2px);
  margin-right: 4px;
}

/* title bar */
.titlebar {
  display: flex;
  align-items: center;
  height: 26px;
  padding-bottom: 3px;
  padding-right: 6px;
  background: #515151;
  color: #ddd;
}
.logo { width: 25px; height: 25px; }
.logo-text { font-size: 7px; font-weight: 700; fill: #e88a35; text-anchor: middle; }
.quick, .quick-end, .materials, .help-area, .window-btns {
  display: flex;
  align-items: center;
  gap: 8px;
}
.quick { padding-left: 8px; }
.quick svg, .quick-end button svg { width: 16px; height: 16px; }
.quick .caret { width: 5px; height: 3px; margin: 0 1px 0 -2px; }
.bright { color: #f2f2f2; }
.dim { color: #999; }
.flip { color: #888; transform: scaleX(-1); }
.materials { gap: 4px; padding: 0 4px 0 3px; }
.dark-combo {
  position: relative;
  width: 100px;
  height: 22px;
  background: #949494;
  color: #4c4c4c;
}
.dark-combo select { width: 80px; height: 22px; padding-left: 7px; overflow: hidden; }
.with-icon { display: flex; align-items: center; padding-left: 4px; }
.with-icon select { width: 60px; padding-left: 2px; }
.dc-arrow { position: absolute; right: 3px; top: 9px; width: 8px; height: 5px; }
.quick-end button { width: 16px; height: 16px; }
.fx { font-family: "Liberation Serif", serif; font-size: 16px; line-height: 16px; color: #111; white-space: nowrap; }
.fx sub { font-size: 11px; line-height: 8px; }
.menu-caret { width: 8px; height: 8px; margin-left: 3px; }
.titlebar h1 { flex: 1; text-align: center; }
.play { width: 5px; height: 8px; }
.help-area .play { margin-right: -3px; }
.help-search { width: 180px; height: 19px; padding: 0 5px; background: #949494; }
.help-search::placeholder { color: #d8d8d8; opacity: 1; }
.user { width: 83px; margin-left: -4px; white-space: nowrap; }
.help-area { margin-right: 22px; }
.help-area .user-caret { margin-left: -6px; }
.tb-sep { width: 1px; height: 18px; margin: 0 1px; background: #777; }
.window-btns { gap: 11px; }
.window-btns svg { width: 14px; height: 14px; }

/* ribbon tabs */
.tabs {
  display: flex;
  align-items: center;
  height: 20px;
  background: #515151;
  color: #d0d0d0;
  white-space: nowrap;
}
.tabs a { line-height: 20px; padding: 0 10px 0 9px; }
.tabs .file { background: #ee8022; color: #fff; padding: 0 8px; margin-right: 3px; }
.tabs .active { background: #f5f5f5; color: #444; }
.tab-min { width: 24px; height: 10px; margin-left: 21px; }

/* ribbon */
.ribbon {
  display: flex;
  height: 94px;
  background: #f5f5f5;
  color: #404040;
}
.panel {
  position: relative;
  display: flex;
  flex-direction: column;
  flex: none;
  border-right: 1px solid #d6d6d6;
}
.panel h2 { margin-top: auto; height: 18px; line-height: 18px; text-align: center; }
.big {
  display: flex;
  flex-direction: column;
  align-items: center;
  padding-top: 5px;
  line-height: 15px;
}
.big svg { width: 32px; height: 32px; margin-bottom: 5px; }
.p-sketch { width: 81px; }
.sk-caret { position: absolute; left: 70px; top: 57px; }
.p-create { width: 373px; }
.tools { display: flex; padding-left: 3px; gap: 3px; }
.tools .big { align-self: flex-start; white-space: nowrap; }
.b-ext { width: 38px; }
.b-rev { width: 62px; }
.small-grid {
  display: grid;
  grid-template-columns: 88px 81px 88px;
  grid-auto-rows: 24px;
  padding-top: 3px;
  padding-left: 3px;
}
.small-grid button { display: flex; align-items: center; gap: 5px; white-space: nowrap; }
.small-grid svg { width: 16px; height: 16px; }
.p-modify, .p-explore, .p-work, .p-pattern, .p-free { flex-direction: row; align-items: flex-start; padding-top: 4px; }
.p-modify { width: 278px; padding-left: 11px; gap: 20px; }
.chamfer { display: flex; align-items: center; gap: 5px; width: 106px; height: 22px; margin-left: -5px; }
.cell {
  display: flex;
  align-items: center;
  justify-content: center;
  width: 23px;
  height: 22px;
  border: 1px solid #ccc;
}
.p-modify .cell { margin-left: -8px; }
.p-modify .cell + .cell { margin-left: -18px; }
.p-explore { width: 66px; padding-left: 23px; }
.p-work { width: 133px; padding-left: 32px; gap: 11px; }
.p-pattern { width: 55px; padding-left: 3px; gap: 2px; }
.p-free { width: 100px; padding-left: 20px; gap: 8px; }
.cell.wide { width: 34px; gap: 5px; }
.p-surface { width: 80px; }
.cells { display: grid; grid-template-columns: repeat(3, 23px); gap: 2px; padding: 4px 3px; }
.p-sim { width: 70px; }
.p-conv { width: 76px; }
.p-sim .big, .p-conv .big { white-space: nowrap; }
.p-last { padding: 4px 3px; border: 0; }

/* work area */
.work { display: flex; flex: 1; min-height: 0; }
.browser { width: 234px; border-right: 4px solid #575757; font-size: 11px; background: #fff; }
.browser-head {
  display: flex;
  align-items: center;
  gap: 10px;
  height: 24px;
  padding-right: 2px;
  background: #606060;
}
.model-tab {
  display: flex;
  align-items: center;
  justify-content: space-between;
  width: 79px;
  height: 24px;
  padding: 0 13px 0 7px;
  background: #fff;
  color: #445066;
}
.model-tab svg { width: 10px; height: 10px; }
.plus { width: 10px; height: 10px; margin-left: -5px; }
.hd { width: 14px; height: 14px; }
.tree { padding-top: 1px; }
.tree li {
  position: relative;
  display: flex;
  align-items: center;
  gap: 2px;
  height: 20px;
  padding-left: 19px;
}
.tree li::before {
  content: "";
  position: absolute;
  left: 9px;
  top: 0;
  bottom: 0;
  width: 9px;
  border-left: 1px dotted #888;
  background: repeating-linear-gradient(to right, #999 0 1px, transparent 1px 2px) 4px 10px / 8px 1px no-repeat;
}
.tree .leaf::before { background-position: 0 10px; }
.tree .last::before { bottom: 9px; }
.tree .root { padding-left: 3px; }
.tree .root::before { display: none; }
.exp { position: absolute; left: 5px; top: 5px; width: 10px; height: 10px; background: #fff; }

.viewport { display: flex; flex-direction: column; flex: 1; }
.canvas {
  position: relative;
  flex: 1;
  overflow: hidden;
  background:
    linear-gradient(to bottom, rgba(140, 146, 160, 0) 0, rgba(140, 146, 160, .04) 50%, rgba(146, 150, 163, .4) 66%, rgba(152, 156, 167, .85) 75%, #acaeb5 85%, #bfc0c3 100%),
    linear-gradient(170deg, rgba(40, 46, 58, .25), rgba(40, 46, 58, 0) 60%),
    linear-gradient(to right, #434c5a 0, #6c7684 13%, #8c96a8 40%, #8791a3 80%, #636c7b 90%, #4b5361 100%);
}
.axes { position: absolute; left: 45px; bottom: 30px; width: 40px; height: 60px; font-size: 11px; font-weight: 500; }
.part { position: absolute; left: 884px; top: 302px; width: 60px; height: 80px; }
.cube { position: absolute; right: 18px; top: 41px; width: 56px; height: 62px; }
.doc-btns { position: absolute; right: 2px; top: 6px; display: flex; gap: 8px; }
.doc-btns svg { width: 12px; height: 12px; }
.navbar { position: absolute; right: 2px; top: 117px; width: 32px; height: 197px; border-radius: 4px; background: #6d727b; }
.view-strip {
  display: flex;
  align-items: center;
  gap: 8px;
  height: 24px;
  padding-left: 4px;
  background: #606060;
  color: #b8cbe4;
}
.view-strip svg { width: 16px; height: 16px; }
.strip-tab { border-left: 1px solid #999; padding-left: 8px; margin-left: -4px; line-height: 24px; }

.status {
  display: flex;
  align-items: center;
  height: 24px;
  background: #f5f5f5;
}
.msg { flex: 1; padding-left: 1px; }
.num { width: 39px; padding-left: 9px; line-height: 20px; border-left: 1px solid #d0d0d0; }

/* save dialog */
.dialog {
  position: absolute;
  left: 369px;
  top: 62px;
  width: 750px;
  border: 1px solid #63676c;
  background: #efefef;
  box-shadow: 0 4px 16px rgba(0, 0, 0, .45);
}
.dlg-head {
  display: flex;
  align-items: center;
  gap: 5px;
  height: 30px;
  padding: 0 9px 0 8px;
  background: #fff;
}
.dlg-head h2 { flex: 1; }
.dlg-head svg { margin-bottom: 2px; }
.dlg-head button svg { width: 12px; height: 12px; }
.dlg-body { display: flex; gap: 13px; padding: 11px 11px 15px; height: 577px; }
.places { width: 182px; padding: 1px 4px; background: #bfccd9; border: 1px solid #7f8894; }
.places li { display: flex; align-items: center; gap: 4px; height: 18px; }
.places .child { padding-left: 19px; }
.files { flex: 1; display: flex; flex-direction: column; padding-right: 5px; }
.lookin { display: flex; align-items: center; height: 22px; margin: 5px 0 6px; font-size: 11px; }
.lookin label { width: 62px; padding-left: 4px; }
.lookin .combo { width: 209px; padding-left: 5px; gap: 3px; }
.combo {
  position: relative;
  display: flex;
  align-items: center;
  width: 327px;
  height: 22px;
  padding-left: 3px;
  border: 1px solid #7a7a7a;
  background: #fff;
}
.combo select, .combo input { flex: 1; min-width: 0; }
.combo .chev { position: absolute; right: 3px; top: 7px; width: 10px; height: 6px; pointer-events: none; }
.combo.focus { border-color: #0078d7; }
.combo.gray { background: #e1e1e1; border-color: #adadad; }
.combo input::selection { background: #0078d7; color: #fff; }
.nav-btns { display: flex; gap: 7px; padding-left: 5px; }
.nav-btns svg { width: 16px; height: 16px; }
.nav-btns .views svg { width: 24px; }
.list { position: relative; flex: 1; background: #fff; overflow: hidden; }
.sort { position: absolute; left: 132px; top: 0; width: 8px; height: 5px; }
.list table { width: 100%; height: 100%; border-collapse: collapse; table-layout: fixed; }
.c-name { width: 270px; }
.c-date { width: 143px; }
.list th, .list td { padding: 0 0 0 6px; text-align: left; font-weight: 400; white-space: nowrap; overflow: hidden; }
.list th { height: 24px; }
.list td { height: 19px; }
.list .filler td { height: auto; }
.list th + th, .list td + td { border-left: 1px solid #e8eff7; }
.fname { display: flex; align-items: center; gap: 3px; padding-left: 1px; }
.hscroll { display: flex; align-items: center; height: 15px; margin-bottom: 10px; padding: 0 5px 0 4px; }
.hscroll svg { width: 8px; height: 10px; }
.track { flex: 1; padding-left: 5px; }
.thumb { width: 420px; height: 15px; background: #cdcdcd; }
.field { display: flex; align-items: center; height: 22px; margin-bottom: 8px; font-size: 11px; }
.field:last-child { margin-bottom: 7px; }
.field label { width: 99px; padding-left: 2px; white-space: nowrap; }

.dlg-foot {
  display: flex;
  align-items: flex-start;
  margin: 0 11px;
  padding: 11px 0 17px;
  border-top: 1px solid #a0a0a0;
  box-shadow: inset 0 1px #fff;
}
.btn, .help-btn { height: 21px; font-size: 11px; background: #e1e1e1; border: 1px solid #adadad; }
.help-btn { width: 22px; margin-left: 1px; }
.help-btn svg { width: 18px; height: 18px; margin: auto; }
.preview { width: 91px; margin-right: 12px; }
.options { width: 73px; margin-right: 56px; }
.primary { width: 73px; margin-right: 7px; background: #e5f1fb; border-color: #0078d7; }
.cancel { width: 73px; }
.grip { position: absolute; right: 3px; bottom: 2px; width: 8px; height: 8px; }

/* palette */
.palette { position: absolute; right: 8px; top: 238px; width: 34px; }
.pen { width: 34px; height: 34px; margin-bottom: 7px; }
.palette-box { padding: 2px; background: #fff; box-shadow: 0 0 8px rgba(0, 0, 0, .5); }
.palette-box button { display: block; width: 30px; height: 30px; }
.palette-box svg { width: 30px; height: 30px; }
.palette-box .on { background: #33c1ee; }
.swatches { display: grid; grid-template-columns: 15px 15px; grid-auto-rows: 15px; }
.cyan { background: #00adef; }
.yellow { background: #fff200; }
.pink { background: #ff0f8b; }
.black { background: #000; }
.palette-box .current { background: #00adef; }
```
